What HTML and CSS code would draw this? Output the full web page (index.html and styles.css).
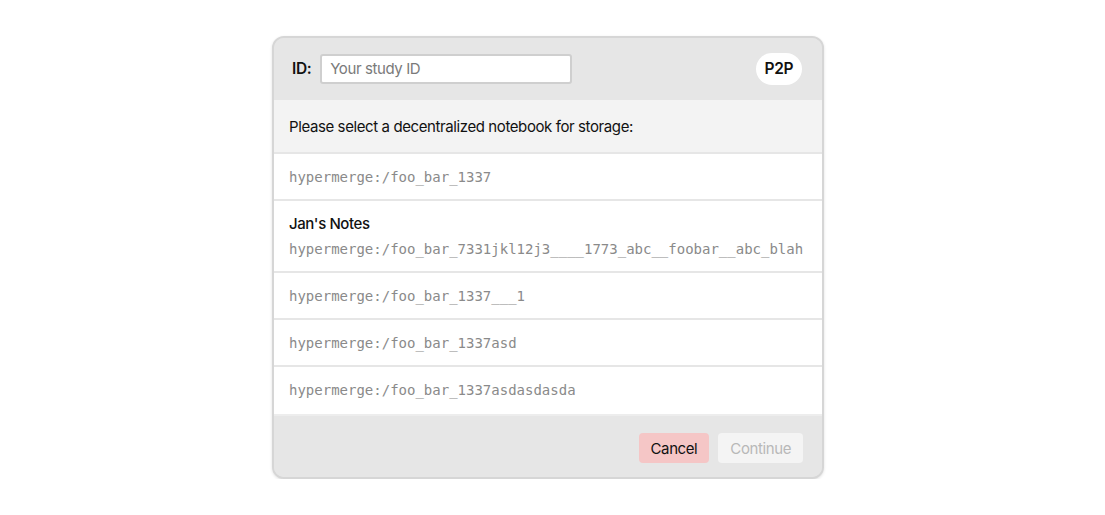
FILE: index.html
```html
<!DOCTYPE html>
<html>
<head>
<meta charset="utf-8">
<link rel="stylesheet" href="styles.css">
</head>
<body>
<div class="page">
  <div class="dialog">
    <div class="header">
      <label class="id-label">ID:</label>
      <input class="id-input" type="text" placeholder="Your study ID">
      <span class="spacer"></span>
      <span class="pill">P2P</span>
    </div>
    <div class="prompt">Please select a decentralized notebook for storage:</div>
    <div class="list">
      <div class="row"><div class="url">hypermerge:/foo_bar_1337</div></div>
      <div class="row two"><div class="title">Jan's Notes</div><div class="url">hypermerge:/foo_bar_7331jkl12j3____1773_abc__foobar__abc_blah</div></div>
      <div class="row"><div class="url">hypermerge:/foo_bar_1337___1</div></div>
      <div class="row"><div class="url">hypermerge:/foo_bar_1337asd</div></div>
      <div class="row"><div class="url">hypermerge:/foo_bar_1337asdasdasda</div></div>
    </div>
    <div class="footer">
      <button class="btn cancel">Cancel</button>
      <button class="btn continue">Continue</button>
    </div>
  </div>
</div>
</body>
</html>
```
FILE: styles.css
```css
* { box-sizing: border-box; }
html, body { margin: 0; padding: 0; background: #ffffff; }
body {
  font-family: Inter, "Liberation Sans", sans-serif;
  color: #111;
  font-size: 15px;
  letter-spacing: -0.4px;
}
.page { padding: 36px 0 0 272px; }
.dialog {
  width: 552px;
  border: 2px solid #d6d6d6;
  border-radius: 12px;
  overflow: hidden;
  background: #e6e6e6;
  box-shadow: 0 1px 3px rgba(0,0,0,0.12);
}
.header {
  height: 62px;
  display: flex;
  align-items: center;
  padding: 0 20px 1px 18px;
  background: #e6e6e6;
}
.id-label { font-size: 15.5px; font-weight: 600; margin-right: 9px; }
.id-input {
  width: 252px;
  height: 30px;
  border: 2px solid #cfcfcf;
  border-radius: 3px;
  background: #fff;
  padding: 0 8px;
  font-family: Inter, "Liberation Sans", sans-serif;
  font-size: 15px;
  letter-spacing: -0.4px;
  color: #111;
  outline: none;
}
.id-input::placeholder { color: #7a7a7a; }
.spacer { flex: 1; }
.pill {
  height: 32px;
  padding: 0 9px;
  display: flex;
  align-items: center;
  background: #fff;
  border-radius: 16px;
  font-size: 15.5px;
  font-weight: 600;
}
.prompt {
  height: 54px;
  display: flex;
  align-items: center;
  padding: 0 15px;
  background: #f3f3f3;
  border-bottom: 2px solid #e6e6e6;
}
.list { background: #fff; }
.row {
  padding: 13px 15px 12px;
  border-bottom: 2px solid #e6e6e6;
  background: #fff;
}
.row:last-child { padding-bottom: 14px; border-bottom-color: #ededed; }
.row.two { display: flex; flex-direction: column; gap: 5px; }
.title { line-height: 20px; font-weight: 500; color: #111; }
.url {
  font-family: "DejaVu Sans Mono", "Liberation Mono", monospace;
  font-size: 14px;
  letter-spacing: 0;
  line-height: 20px;
  color: #8a8a8a;
  white-space: nowrap;
}
.footer {
  height: 61px;
  display: flex;
  justify-content: flex-end;
  align-items: center;
  gap: 9px;
  padding: 3px 19px 0 0;
  background: #e6e6e6;
}
.btn {
  height: 30px;
  border: none;
  border-radius: 4px;
  font-family: Inter, "Liberation Sans", sans-serif;
  font-size: 15px;
  letter-spacing: -0.4px;
  padding: 0 12px;
}
.cancel { background: #f5c6c6; color: #111; }
.continue { background: #f4f4f4; color: #b8b8b8; }
```
